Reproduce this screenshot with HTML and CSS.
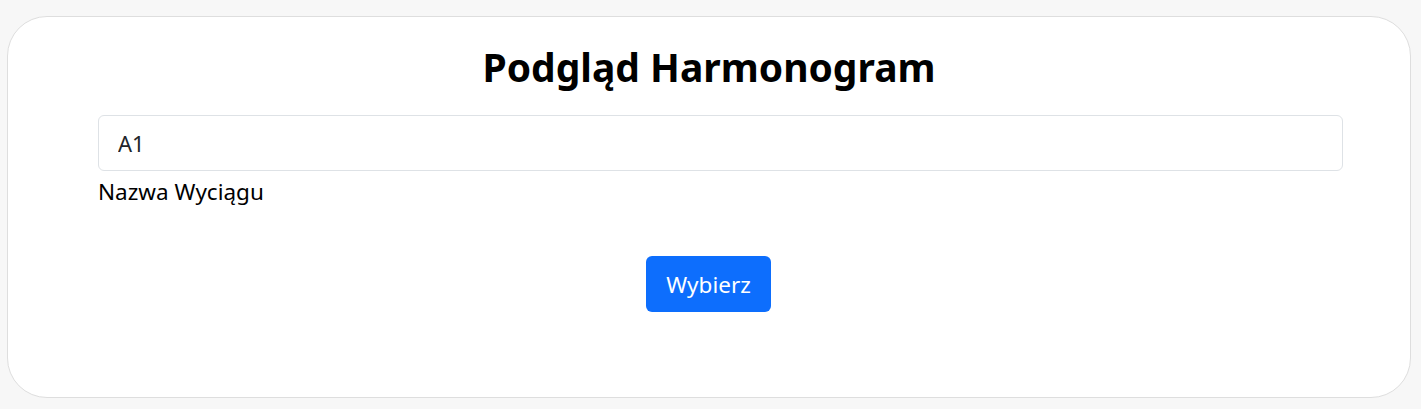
FILE: index.html
```html
<!DOCTYPE html>
<html lang="pl">
<head>
<meta charset="utf-8">
<title>Podgląd Harmonogram</title>
<link rel="stylesheet" href="styles.css">
</head>
<body>
  <main class="card">
    <h1 class="title">Podgląd Harmonogram</h1>
    <div class="field">
      <input class="input" type="text" value="A1">
      <label class="label">Nazwa Wyciągu</label>
    </div>
    <div class="actions">
      <button class="btn" type="button">Wybierz</button>
    </div>
  </main>
</body>
</html>
```
FILE: styles.css
```css
* { box-sizing: border-box; }
html, body { margin: 0; }
body {
  background: #f7f7f7;
  padding: 16px 11px 10px 7px;
  font-family: "Noto Sans", "Open Sans", sans-serif;
  color: #212529;
}
.card {
  width: 1404px;
  height: 382px;
  background: #fff;
  border: 1px solid #dedede;
  border-radius: 40px;
  padding: 26px 0 0 0;
  display: flex;
  flex-direction: column;
}
.title {
  margin: 0;
  text-align: center;
  font-size: 39px;
  line-height: 48px;
  font-weight: 700;
  color: #000;
}
.field {
  margin: 24px 67px 0 90px;
  display: flex;
  flex-direction: column;
}
.input {
  height: 56px;
  width: 100%;
  border: 1px solid #dee2e6;
  border-radius: 6px;
  padding: 0 19px;
  font: inherit;
  font-size: 22px;
  color: #212529;
  background: #fff;
}
.label {
  margin-top: 4px;
  font-size: 22.5px;
  line-height: 33px;
  color: #000;
}
.actions {
  display: flex;
  justify-content: center;
  margin-top: 48px;
  padding-right: 1px;
}
.btn {
  width: 125px;
  height: 56px;
  background: #0d6efd;
  color: #fff;
  border: none;
  border-radius: 6px;
  font: inherit;
  font-size: 22.5px;
  padding: 0;
}
```
